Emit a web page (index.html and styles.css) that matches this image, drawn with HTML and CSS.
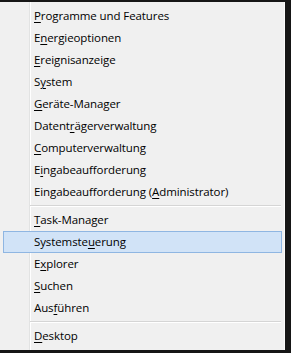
FILE: index.html
```html
<!DOCTYPE html>
<html>
<head>
<meta charset="utf-8">
<link rel="stylesheet" href="styles.css">
</head>
<body>
<div class="menu">
  <div class="item"><u>P</u>rogramme und Features</div>
  <div class="item">E<u>n</u>ergieoptionen</div>
  <div class="item"><u>E</u>reignisanzeige</div>
  <div class="item">S<u>y</u>stem</div>
  <div class="item"><u>G</u>eräte-Manager</div>
  <div class="item">Datent<u>r</u>ägerverwaltung</div>
  <div class="item"><u>C</u>omputerverwaltung</div>
  <div class="item">E<u>i</u>ngabeaufforderung</div>
  <div class="item">Eingabeaufforderung (<u>A</u>dministrator)</div>
  <div class="sep"></div>
  <div class="item"><u>T</u>ask-Manager</div>
  <div class="item active">Systemste<u>u</u>erung</div>
  <div class="item">E<u>x</u>plorer</div>
  <div class="item"><u>S</u>uchen</div>
  <div class="item">Aus<u>f</u>ühren</div>
  <div class="sep"></div>
  <div class="item"><u>D</u>esktop</div>
</div>
</body>
</html>
```
FILE: styles.css
```css
html, body {
  margin: 0;
  padding: 0;
  background: #161616;
  width: 291px;
  height: 353px;
  overflow: hidden;
}
.menu {
  margin-top: 2px;
  width: 285px;
  box-sizing: border-box;
  padding: 3px 0 3px 0;
  border-right: 1px solid #fbfbfb;
  background: linear-gradient(to right, #f0f0f0 29px, #e2e3e3 29px, #e2e3e3 30px, #ffffff 30px, #ffffff 31px, #f0f0f0 31px);
  font-family: "Open Sans", "Noto Sans", sans-serif;
  font-size: 11.5px;
  letter-spacing: -0.1px;
  color: #000;
  display: flex;
  flex-direction: column;
}
.item {
  height: 22px;
  box-sizing: border-box;
  margin: 0 2px 0 3px;
  padding-left: 30px;
  border: 1px solid transparent;
  line-height: 20px;
  white-space: nowrap;
}
.item u {
  text-decoration-thickness: 1px;
  text-underline-offset: 2px;
}
.item.active {
  background: #d1e3f7;
  border-color: #8fb6e2;
}
.sep {
  height: 6px;
  margin-left: 30px;
  margin-right: 3px;
  box-sizing: border-box;
  padding-top: 2px;
}
.sep::before {
  content: "";
  display: block;
  height: 1px;
  background: #d5d5d5;
  border-bottom: 1px solid #ffffff;
}
```
